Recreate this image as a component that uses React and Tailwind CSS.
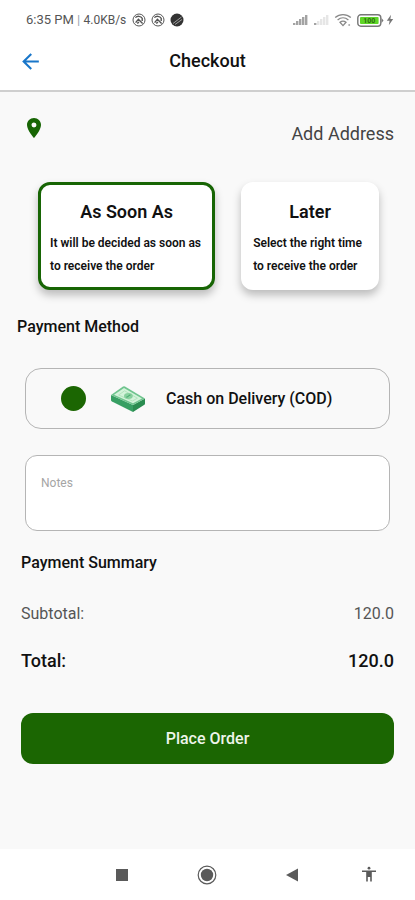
import React, { useState } from 'react';
import { MdArrowBack, MdLocationOn } from 'react-icons/md';

const slots = [
    { id: 'asap', title: 'As Soon As', lines: ['It will be decided as soon as', 'to receive the order'] },
    { id: 'later', title: 'Later', lines: ['Select the right time', 'to receive the order'] },
];

const BlockedIcon = () => (
    <svg viewBox="0 0 14 14" className="size-[14px]" fill="none" stroke="#555">
        <circle cx="7" cy="7" r="6" strokeWidth="1" />
        <path d="M3.4 4.6C5 2.8 9 2.8 10.2 5.2V8M3.6 9.6L6.4 6.2L10.6 10.6M5.2 10.4L7 9.2" strokeWidth="1.4" />
    </svg>
);

const FilledIcon = () => (
    <svg viewBox="0 0 14 14" className="size-[14px]">
        <circle cx="7" cy="7" r="6.5" fill="#333" />
        <path d="M3 10.5L11.5 4M5 11.5L12 6.5" stroke="#aaa" strokeWidth="0.9" />
    </svg>
);

const SignalIcon = ({ level }) => (
    <svg viewBox="0 0 16 12" className="h-3 w-4">
        {[2, 4, 6, 8, 10].map((h, i) => (
            <rect key={h} x={i * 3 + 1} y={11 - h} width="2.4" height={h} fill={i < level ? '#a3a3a3' : '#e6e6e6'} />
        ))}
    </svg>
);

const WifiIcon = () => (
    <svg viewBox="0 0 18 14" className="h-[14px] w-[18px]" fill="none" stroke="#888" strokeWidth="1.3">
        <path d="M1.2 4.6C5.6 0.6 12.4 0.6 16.8 4.6" />
        <path d="M3.6 7C6.8 4.2 11.2 4.2 14.4 7" />
        <path d="M6 9.3C7.8 7.8 10.2 7.8 12 9.3L9 12.6Z" />
        <circle cx="15.2" cy="12" r="1" fill="#aaa" stroke="none" />
    </svg>
);

const BatteryIcon = () => (
    <svg viewBox="0 0 27 13" className="h-[13px] w-[27px]">
        <rect x="0.8" y="0.8" width="23" height="11.4" rx="3" fill="#fff" stroke="#777" strokeWidth="1.4" />
        <path d="M24.5 4L26.5 6.5L24.5 9Z" fill="#777" />
        <rect x="3" y="3" width="18.6" height="7" rx="1" fill="#5fd626" />
        <text x="12.3" y="9" textAnchor="middle" fontSize="7" fontWeight="700" fill="#2c6b12">100</text>
    </svg>
);

const BoltIcon = () => (
    <svg viewBox="0 0 8 12" className="h-3 w-2">
        <path d="M5 0.8L0.8 6.8H3.6L2.8 11.2L7.2 5H4.4Z" fill="#777" />
    </svg>
);

const CashIcon = () => (
    <svg viewBox="0 0 36 28" className="h-7 w-9">
        <path d="M1 10L23 20V27L2 16.5Q1 16 1 15Z" fill="#379f63" />
        <path d="M23 20L35 13.5V18.5Q35 19.5 34 20L23 27Z" fill="#2a8c50" />
        <path d="M1 10L13 1.6Q14 1 15 1.5L35 13.5L23 20Z" fill="#6fc48e" />
        <path d="M4 9.8L14 3L32 13.4L23 18.2Z" fill="#d3f3da" />
        <path d="M8.6 10L14.6 5.8L27.4 13.2L22.4 16Z" fill="none" stroke="#aadfb8" strokeWidth="0.8" />
        <ellipse cx="18.4" cy="11" rx="4.4" ry="2.9" fill="#86d09d" />
        <path d="M16.4 12.1C18.4 12.9 18.4 9.3 20.4 10.1" fill="none" stroke="#379f63" strokeWidth="1" />
    </svg>
);

const StatusBar = () => (
    <div className="flex h-10 items-center justify-between pr-[21px] pl-[26px] text-[#555]">
        <div className="flex items-center gap-[5px]">
            <span className="mr-px text-[13px]">6:35 PM <span className="text-gray-400">|</span> <span className="text-xs">4.0KB/s</span></span>
            <BlockedIcon />
            <BlockedIcon />
            <FilledIcon />
        </div>
        <div className="flex items-center gap-[5px]">
            <SignalIcon level={5} />
            <SignalIcon level={1} />
            <WifiIcon />
            <div className="flex items-center gap-0.5">
                <BatteryIcon />
                <BoltIcon />
            </div>
        </div>
    </div>
);

const SystemNav = () => (
    <nav className="flex h-[51px] items-center justify-between bg-white pt-px pr-[37px] pl-[113px] text-[#5a5a5a]">
        <div className="flex items-center gap-[66px]">
            <button aria-label="Recent apps">
                <svg viewBox="0 0 18 18" className="size-[18px]"><rect x="3" y="3" width="12" height="12" fill="currentColor" /></svg>
            </button>
            <button aria-label="Home">
                <svg viewBox="0 0 20 20" className="size-5">
                    <circle cx="10" cy="10" r="8.8" fill="none" stroke="currentColor" strokeWidth="1.2" />
                    <circle cx="10" cy="10" r="6.2" fill="currentColor" />
                </svg>
            </button>
            <button aria-label="Back">
                <svg viewBox="0 0 18 18" className="size-[18px]"><path d="M3 9L15 2.5V15.5Z" fill="currentColor" /></svg>
            </button>
        </div>
        <button aria-label="Accessibility">
            <svg viewBox="0 0 18 18" className="size-[18px]" fill="currentColor">
                <circle cx="9" cy="2.2" r="1.4" />
                <path d="M2 4.6H16V6.1H11.8V15.5H10.2V11H7.8V15.5H6.2V6.1H2Z" />
            </svg>
        </button>
    </nav>
);

const SlotCard = ({ slot, checked, onSelect }) => (
    <label className={`block cursor-pointer rounded-xl border-[3px] bg-white px-[9px] pt-[11px] pb-[9px] shadow-[0_5px_9px_rgba(0,0,0,0.25)] ${checked ? 'border-[#176504]' : 'border-white'}`}>
        <input type="radio" name="slot" className="sr-only" checked={checked} onChange={onSelect} />
        <span className="block text-center text-lg leading-8 font-semibold">{slot.title}</span>
        <span className="mt-1 block text-xs leading-[23px] font-semibold whitespace-nowrap">
            {slot.lines[0]}<br />{slot.lines[1]}
        </span>
    </label>
);

const App = () => {
    const [slot, setSlot] = useState('asap');
    const [notes, setNotes] = useState('');

    return (
        <div className="flex min-h-screen flex-col bg-[#f9f9f9] font-['Roboto','Liberation_Sans',sans-serif] text-[#111]">
            <header className="border-b-2 border-[#cfcfcf] bg-white">
                <StatusBar />
                <div className="grid h-[50px] grid-cols-[1fr_auto_1fr] items-start px-[18px]">
                    <button aria-label="Go back" className="mt-[9px] justify-self-start text-[#1976c9]">
                        <MdArrowBack size={25} />
                    </button>
                    <h1 className="mt-[9px] text-lg leading-6 font-medium">Checkout</h1>
                </div>
            </header>

            <main className="flex-1 pt-6">
                <div className="flex items-start justify-between pr-[21px] pl-[22px]">
                    <MdLocationOn size={24} className="text-[#176504]" />
                    <a href="#address" className="text-lg leading-9 text-[#444]">Add Address</a>
                </div>

                <div className="mt-[30px] grid grid-cols-[9fr_7fr] gap-[26px] pr-9 pl-[38px]">
                    {slots.map((s) => (
                        <SlotCard key={s.id} slot={s} checked={slot === s.id} onSelect={() => setSlot(s.id)} />
                    ))}
                </div>

                <h2 className="mt-[25px] pl-[17px] text-base leading-6 font-medium">Payment Method</h2>
                <label className="mx-[25px] mt-[29px] flex h-[61px] items-center rounded-2xl border border-[#b5b5b5] pl-[35px]">
                    <input type="radio" name="payment" defaultChecked className="size-[25px] appearance-none rounded-full bg-[#1b6602]" />
                    <span className="ml-6"><CashIcon /></span>
                    <span className="ml-5 text-base font-medium">Cash on Delivery (COD)</span>
                </label>

                <div className="mx-[25px] mt-[26px] flex">
                    <textarea
                        aria-label="Notes"
                        placeholder="Notes"
                        value={notes}
                        onChange={(e) => setNotes(e.target.value)}
                        className="h-[76px] w-full resize-none rounded-xl border border-[#b5b5b5] bg-white px-[15px] py-[19px] text-xs leading-4 placeholder:text-[#a5a5a5]"
                    />
                </div>

                <section className="mt-5 px-[21px]">
                    <h2 className="text-base leading-6 font-medium">Payment Summary</h2>
                    <div className="mt-[27px] flex justify-between text-base leading-6 text-[#555]">
                        <span>Subtotal:</span>
                        <span>120.0</span>
                    </div>
                    <div className="mt-[23px] flex justify-between text-lg leading-6 font-medium">
                        <span>Total:</span>
                        <span>120.0</span>
                    </div>
                    <button className="mt-10 h-[51px] w-full rounded-xl bg-[#1b6602] text-base font-medium text-[#eef5ea]">
                        Place Order
                    </button>
                </section>
            </main>

            <SystemNav />
        </div>
    );
};

export default App;
